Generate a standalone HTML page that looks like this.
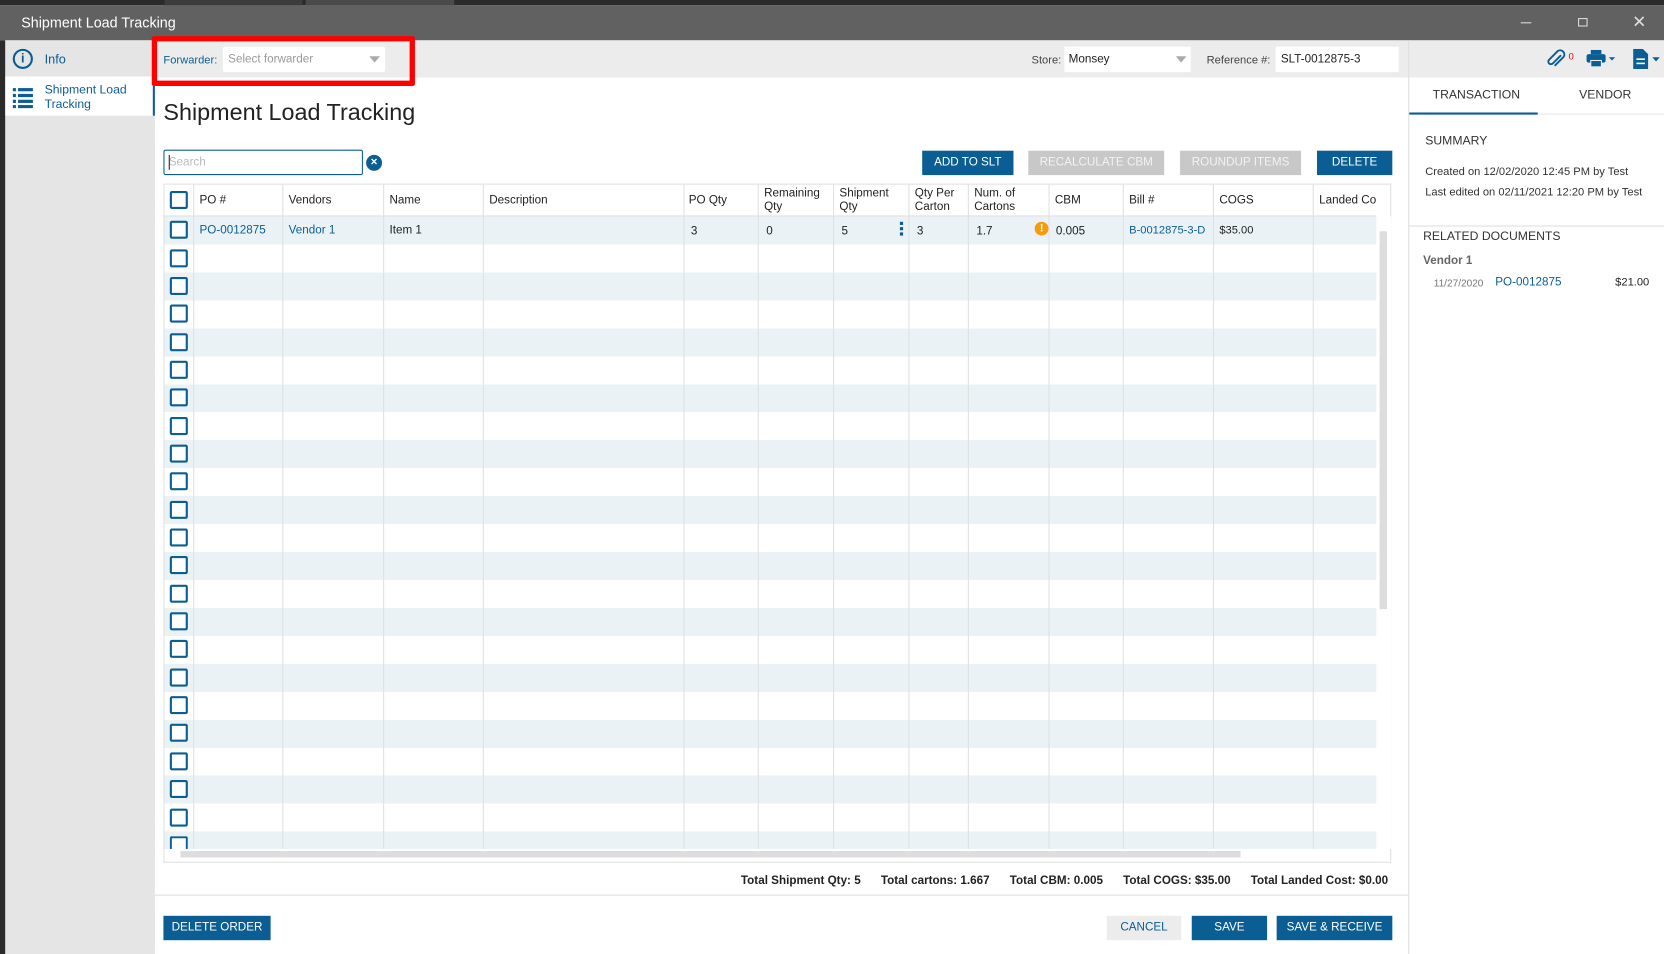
<!DOCTYPE html>
<html><head><meta charset="utf-8"><style>
*{box-sizing:border-box;margin:0;padding:0}
html,body{width:1664px;height:954px;overflow:hidden;background:#fff;font-family:"Liberation Sans",sans-serif}
#w{position:absolute;left:0;top:0;width:1568px;height:899px;transform:scale(1.06122,1.06118);transform-origin:0 0;font-size:11px;color:#222}
.a{position:absolute}
.blue{color:#0b5e94}
.btn{position:absolute;height:23px;color:#fff;background:#0b5e94;text-align:center;line-height:23px;font-size:11px}
.gb{background:#c8c8c8;color:#f2f2f2}
.cb{position:absolute;left:160px;width:17px;height:17px;border:2px solid #0b5e94;border-radius:2px;background:#fff}
.vl{position:absolute;top:174px;height:626px;width:1px;background:#e0e0e0}
.h{position:absolute;top:176px;line-height:13px;font-size:11px}
.t{margin-left:19px}
</style></head><body><div id="w">
<div class="a" style="left:0;top:0;width:1568px;height:5px;background:#2b2b2b"></div>
<div class="a" style="left:155px;top:0;width:130px;height:5px;background:#3c3c3c"></div>
<div class="a" style="left:288px;top:0;width:140px;height:5px;background:#4a4a4a"></div>
<div class="a" style="left:0;top:5px;width:1568px;height:33px;background:#616161"></div>
<div class="a" style="left:20px;top:14px;color:#fff;font-size:13.5px">Shipment Load Tracking</div>
<div class="a" style="left:1433px;top:21px;width:10px;height:1px;background:#ddd"></div>
<div class="a" style="left:1487px;top:17px;width:9px;height:8px;border:1px solid #ddd"></div>
<div class="a" style="left:1538px;top:11px;color:#ddd;font-size:16px">✕</div>
<div class="a" style="left:0;top:38px;width:5px;height:861px;background:#2b2b2b"></div>
<div class="a" style="left:5px;top:38px;width:141px;height:861px;background:#e5e5e5"></div>
<div class="a" style="left:5px;top:72px;width:140px;height:37px;background:#fff"></div>
<div class="a" style="left:144px;top:72px;width:2px;height:37px;background:#0b5e94"></div>
<div class="a" style="left:12px;top:46px;width:19px;height:19px;border:2px solid #0b5e94;border-radius:50%;color:#0b5e94;font-weight:bold;font-size:12px;text-align:center;line-height:15px">i</div>
<div class="a blue" style="left:42px;top:49px;font-size:12px">Info</div>
<svg class="a" style="left:12px;top:82px" width="20" height="20"><g fill="#0b5e94"><rect x="0" y="1" width="3" height="3"/><rect x="5" y="1" width="14" height="3"/><rect x="0" y="6.5" width="3" height="3"/><rect x="5" y="6.5" width="14" height="3"/><rect x="0" y="12" width="3" height="3"/><rect x="5" y="12" width="14" height="3"/><rect x="0" y="17" width="3" height="3"/><rect x="5" y="17" width="14" height="3"/></g></svg>
<div class="a blue" style="left:42px;top:78px;font-size:11.5px;line-height:14px">Shipment Load<br>Tracking</div>
<div class="a" style="left:146px;top:38px;width:1182px;height:35px;background:#ececec"></div>
<div class="a" style="left:146px;top:73px;width:1182px;height:826px;background:#fff"></div>
<div class="a" style="left:1327px;top:38px;width:1px;height:861px;background:#ddd"></div>
<div class="a" style="left:1328px;top:38px;width:240px;height:35px;background:#ececec"></div>
<div class="a" style="left:143px;top:34px;width:248px;height:47px;border:5px solid #f00;border-radius:2px"></div>
<div class="a blue" style="left:154px;top:51px;font-size:10.5px">Forwarder:</div>
<div class="a" style="left:210px;top:44px;width:153px;height:24px;background:#fff;border-radius:2px"></div>
<div class="a" style="left:215px;top:50px;color:#999;font-size:11px">Select forwarder</div>
<div class="a" style="left:348px;top:53px;border-left:5px solid transparent;border-right:5px solid transparent;border-top:6px solid #aaa"></div>
<div class="a" style="left:972px;top:51px;color:#444;font-size:10.5px">Store:</div>
<div class="a" style="left:1003px;top:44px;width:119px;height:24px;background:#fff"></div>
<div class="a" style="left:1007px;top:50px">Monsey</div>
<div class="a" style="left:1108px;top:53px;border-left:5px solid transparent;border-right:5px solid transparent;border-top:6px solid #aaa"></div>
<div class="a" style="left:1137px;top:51px;color:#444;font-size:10.5px">Reference #:</div>
<div class="a" style="left:1202px;top:44px;width:116px;height:24px;background:#fff"></div>
<div class="a" style="left:1207px;top:50px">SLT-0012875-3</div>
<svg class="a" style="left:1456px;top:46px" width="20" height="20"><path d="M15 6 L7 14 a2.5 2.5 0 0 1-3.5-3.5 L12 2 a4 4 0 0 1 5.5 5.5 L9 16" fill="none" stroke="#0b5e94" stroke-width="1.8"/></svg>
<div class="a" style="left:1478px;top:48px;color:#e00;font-size:9px">0</div>
<svg class="a" style="left:1495px;top:47px" width="30" height="18"><rect x="4" y="0" width="10" height="4" fill="#0b5e94"/><rect x="0" y="4" width="18" height="8" rx="2" fill="#0b5e94"/><rect x="4" y="10" width="10" height="6" fill="#0b5e94" stroke="#ececec"/><path d="M21 7h6l-3 3z" fill="#0b5e94"/></svg>
<svg class="a" style="left:1538px;top:46px" width="30" height="20"><path d="M1 0h9l5 5v14H1z" fill="#0b5e94"/><rect x="4" y="9" width="8" height="1.5" fill="#fff"/><rect x="4" y="13" width="8" height="1.5" fill="#fff"/><path d="M19 8h7l-3.5 4z" fill="#0b5e94"/></svg>
<div class="a" style="left:1350px;top:84px;font-size:11.5px;color:#333">TRANSACTION</div>
<div class="a" style="left:1488px;top:84px;font-size:11.5px;color:#333">VENDOR</div>
<div class="a" style="left:1328px;top:107px;width:240px;height:1px;background:#e5e5e5"></div>
<div class="a" style="left:1328px;top:106px;width:121px;height:2px;background:#0b5e94"></div>
<div class="a" style="left:1343px;top:127px;font-size:11.5px;color:#333">SUMMARY</div>
<div class="a" style="left:1343px;top:153px;font-size:10.5px;color:#333;line-height:19px">Created on 12/02/2020 12:45 PM by Test<br>Last edited on 02/11/2021 12:20 PM by Test</div>
<div class="a" style="left:1328px;top:212px;width:240px;height:2px;background:#eee"></div>
<div class="a" style="left:1341px;top:217px;font-size:11.5px;color:#333">RELATED DOCUMENTS</div>
<div class="a" style="left:1341px;top:240px;font-size:11px;color:#666;font-weight:bold">Vendor 1</div>
<div class="a" style="left:1351px;top:262px;font-size:9.5px;color:#777">11/27/2020</div>
<div class="a blue" style="left:1409px;top:260px">PO-0012875</div>
<div class="a" style="left:1522px;top:260px;font-size:10.5px">$21.00</div>
<div class="a" style="left:154px;top:93px;font-size:22px;color:#222">Shipment Load Tracking</div>
<div class="a" style="left:154px;top:141px;width:188px;height:24px;border:1px solid #0b5e94;border-radius:2px"></div>
<div class="a" style="left:159px;top:147px;color:#bbb">Search</div>
<div class="a" style="left:159px;top:146px;width:1px;height:14px;background:#222"></div>
<div class="a" style="left:345px;top:146px;width:15px;height:15px;border-radius:50%;background:#0b5e94;color:#fff;font-size:11px;text-align:center;line-height:15px;font-weight:bold">×</div>
<div class="btn" style="left:869px;top:142px;width:86px">ADD TO SLT</div>
<div class="btn gb" style="left:969px;top:142px;width:128px">RECALCULATE CBM</div>
<div class="btn gb" style="left:1112px;top:142px;width:114px">ROUNDUP ITEMS</div>
<div class="btn" style="left:1241px;top:142px;width:71px">DELETE</div>
<div class="a" style="left:154px;top:173px;width:1157px;height:640px;border:1px solid #e0e0e0"></div>
<div class="a" style="left:155px;top:204px;width:1142px;height:596px;background:repeating-linear-gradient(#eaf2f6 0,#eaf2f6 26.35px,#fff 26.35px,#fff 52.7px)"></div>
<div class="a" style="left:155px;top:203px;width:1142px;height:1px;background:#e0e0e0"></div>
<div class="vl" style="left:182px"></div><div class="vl" style="left:266px"></div><div class="vl" style="left:361px"></div><div class="vl" style="left:455px"></div><div class="vl" style="left:644px"></div><div class="vl" style="left:714px"></div><div class="vl" style="left:785px"></div><div class="vl" style="left:856px"></div><div class="vl" style="left:912px"></div><div class="vl" style="left:988px"></div><div class="vl" style="left:1058px"></div><div class="vl" style="left:1143px"></div><div class="vl" style="left:1237px"></div>
<div class="a" style="left:1297px;top:204px;width:14px;height:596px;background:#fff"></div>
<div class="a" style="left:1300px;top:218px;width:7px;height:356px;background:#ddd"></div>
<div class="a" style="left:170px;top:802px;width:999px;height:6px;background:#ddd"></div>
<div class="cb" style="top:180px"></div>
<div class="h" style="left:188px;top:183px">PO #</div>
<div class="h" style="left:272px;top:183px">Vendors</div>
<div class="h" style="left:367px;top:183px">Name</div>
<div class="h" style="left:461px;top:183px">Description</div>
<div class="h" style="left:649px;top:183px">PO Qty</div>
<div class="h" style="left:720px">Remaining<br>Qty</div>
<div class="h" style="left:791px">Shipment<br>Qty</div>
<div class="h" style="left:862px">Qty Per<br>Carton</div>
<div class="h" style="left:918px">Num. of<br>Cartons</div>
<div class="h" style="left:994px;top:183px">CBM</div>
<div class="h" style="left:1064px;top:183px">Bill #</div>
<div class="h" style="left:1149px;top:183px">COGS</div>
<div class="h" style="left:1243px;top:183px;width:54px;overflow:hidden;white-space:nowrap">Landed Cost</div>
<div class="a blue" style="left:188px;top:211px">PO-0012875</div>
<div class="a blue" style="left:272px;top:211px">Vendor 1</div>
<div class="a" style="left:367px;top:211px">Item 1</div>
<div class="a" style="left:651px;top:212px">3</div>
<div class="a" style="left:722px;top:212px">0</div>
<div class="a" style="left:793px;top:212px">5</div>
<div class="a" style="left:848px;top:209px;width:3px;height:3px;background:#0b5e94;box-shadow:0 5px #0b5e94,0 10px #0b5e94"></div>
<div class="a" style="left:864px;top:212px">3</div>
<div class="a" style="left:920px;top:212px">1.7</div>
<div class="a" style="left:975px;top:209px;width:13px;height:13px;border-radius:50%;background:#f39c12;color:#fff;font-size:10px;font-weight:bold;text-align:center;line-height:13px">!</div>
<div class="a" style="left:995px;top:212px">0.005</div>
<div class="a blue" style="left:1064px;top:211px;font-size:10.5px">B-0012875-3-D</div>
<div class="a" style="left:1149px;top:211px;font-size:10.5px">$35.00</div>
<div class="cb" style="top:208px"></div><div class="cb" style="top:235px"></div><div class="cb" style="top:261px"></div><div class="cb" style="top:287px"></div><div class="cb" style="top:314px"></div><div class="cb" style="top:340px"></div><div class="cb" style="top:366px"></div><div class="cb" style="top:393px"></div><div class="cb" style="top:419px"></div><div class="cb" style="top:445px"></div><div class="cb" style="top:472px"></div><div class="cb" style="top:498px"></div><div class="cb" style="top:524px"></div><div class="cb" style="top:551px"></div><div class="cb" style="top:577px"></div><div class="cb" style="top:603px"></div><div class="cb" style="top:630px"></div><div class="cb" style="top:656px"></div><div class="cb" style="top:682px"></div><div class="cb" style="top:709px"></div><div class="cb" style="top:735px"></div><div class="cb" style="top:762px"></div>
<div class="cb" style="top:788px;height:12px;border-bottom:none;border-radius:2px 2px 0 0"></div>
<div class="a" style="right:260px;top:824px;font-weight:bold;font-size:11px;white-space:nowrap;text-align:right">Total Shipment Qty: 5<span class="t">Total cartons: 1.667</span><span class="t">Total CBM: 0.005</span><span class="t">Total COGS: $35.00</span><span class="t">Total Landed Cost: $0.00</span></div>
<div class="a" style="left:146px;top:843px;width:1181px;height:1px;background:#ddd"></div>
<div class="btn" style="left:154px;top:863px;width:101px">DELETE ORDER</div>
<div class="btn" style="left:1043px;top:863px;width:70px;background:#ececec;color:#0b5e94">CANCEL</div>
<div class="btn" style="left:1123px;top:863px;width:71px">SAVE</div>
<div class="btn" style="left:1203px;top:863px;width:109px">SAVE &amp; RECEIVE</div>
</div></body></html>
